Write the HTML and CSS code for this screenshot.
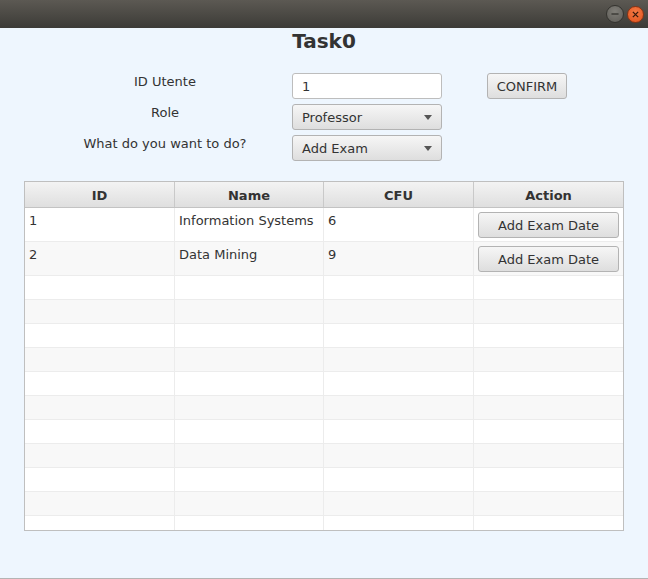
FILE: index.html
```html
<!DOCTYPE html>
<html>
<head>
<meta charset="utf-8">
<link rel="stylesheet" href="styles.css">
</head>
<body>
<div class="window">
  <div class="titlebar">
    <span class="wbtn wbtn-min"><svg width="18" height="18" viewBox="0 0 18 18"><line x1="5" y1="9" x2="13" y2="9" stroke="#3a3935" stroke-width="1.6"/></svg></span>
    <span class="wbtn wbtn-close"><svg width="17" height="17" viewBox="0 0 17 17"><path d="M5.5 5.5 L11.5 11.5 M11.5 5.5 L5.5 11.5" stroke="#3a1a0c" stroke-width="1.5"/></svg></span>
  </div>
  <div class="content">
    <h1 class="title">Task0</h1>
    <div class="form">
      <div class="label">ID Utente</div>
      <div class="field">1</div>
      <div class="btn confirm">CONFIRM</div>
      <div class="label">Role</div>
      <div class="btn combo"><span>Professor</span><svg width="8" height="5" viewBox="0 0 8 5"><path d="M0 0 H8 L4 5 Z" fill="#555"/></svg></div>
      <div></div>
      <div class="label">What do you want to do?</div>
      <div class="btn combo"><span>Add Exam</span><svg width="8" height="5" viewBox="0 0 8 5"><path d="M0 0 H8 L4 5 Z" fill="#555"/></svg></div>
      <div></div>
    </div>
    <div class="table">
      <div class="row head">
        <div class="cell">ID</div><div class="cell">Name</div><div class="cell">CFU</div><div class="cell">Action</div>
      </div>
      <div class="row tall">
        <div class="cell">1</div><div class="cell">Information Systems</div><div class="cell">6</div><div class="cell action"><div class="btn rowbtn">Add Exam Date</div></div>
      </div>
      <div class="row tall odd">
        <div class="cell">2</div><div class="cell">Data Mining</div><div class="cell">9</div><div class="cell action"><div class="btn rowbtn">Add Exam Date</div></div>
      </div>
      <div class="row"><div class="cell"></div><div class="cell"></div><div class="cell"></div><div class="cell"></div></div>
      <div class="row odd"><div class="cell"></div><div class="cell"></div><div class="cell"></div><div class="cell"></div></div>
      <div class="row"><div class="cell"></div><div class="cell"></div><div class="cell"></div><div class="cell"></div></div>
      <div class="row odd"><div class="cell"></div><div class="cell"></div><div class="cell"></div><div class="cell"></div></div>
      <div class="row"><div class="cell"></div><div class="cell"></div><div class="cell"></div><div class="cell"></div></div>
      <div class="row odd"><div class="cell"></div><div class="cell"></div><div class="cell"></div><div class="cell"></div></div>
      <div class="row"><div class="cell"></div><div class="cell"></div><div class="cell"></div><div class="cell"></div></div>
      <div class="row odd"><div class="cell"></div><div class="cell"></div><div class="cell"></div><div class="cell"></div></div>
      <div class="row"><div class="cell"></div><div class="cell"></div><div class="cell"></div><div class="cell"></div></div>
      <div class="row odd"><div class="cell"></div><div class="cell"></div><div class="cell"></div><div class="cell"></div></div>
      <div class="row"><div class="cell"></div><div class="cell"></div><div class="cell"></div><div class="cell"></div></div>
    </div>
  </div>
</div>
</body>
</html>
```
FILE: styles.css
```css
* { box-sizing: border-box; }
html, body { margin: 0; padding: 0; }
body {
  width: 648px;
  height: 579px;
  overflow: hidden;
  font-family: "DejaVu Sans", "Liberation Sans", sans-serif;
  font-size: 13px;
  color: #333333;
  background: #eef6fe;
}
.window {
  height: 579px;
  display: flex;
  flex-direction: column;
  border-bottom: 1px solid #b4b4b4;
}
.titlebar {
  height: 28px;
  flex: none;
  background: linear-gradient(#5c5953, #3c3b37);
  display: flex;
  justify-content: flex-end;
  align-items: center;
  padding-right: 4px;
  gap: 3px;
}
.wbtn {
  border-radius: 50%;
  display: flex;
  align-items: center;
  justify-content: center;
}
.wbtn-min {
  width: 18px; height: 18px;
  background: radial-gradient(circle at 50% 35%, #807e78, #5e5c57);
  border: 1px solid #34332f;
}
.wbtn-close {
  width: 17px; height: 17px;
  background: radial-gradient(circle at 50% 35%, #f47a45, #e2521c);
  border: 1px solid #8a3313;
}
.content {
  flex: 1;
  display: flex;
  flex-direction: column;
}
.title {
  margin: 2px 0 0 0;
  height: 23px;
  line-height: 23px;
  font-size: 20px;
  font-weight: bold;
  text-align: center;
  color: #333;
}
.form {
  margin: 20px 0 0 60px;
  display: grid;
  grid-template-columns: 210px 150px 103px;
  grid-auto-rows: 26px;
  column-gap: 22px;
  row-gap: 5px;
}
.label {
  text-align: center;
  line-height: 18px;
}
.field {
  background: #fff;
  border: 1px solid #bdbdbd;
  border-radius: 3px;
  padding: 2px 0 0 9px;
  line-height: 22px;
}
.btn {
  background: linear-gradient(#f6f6f6, #dedede);
  border: 1px solid #b3b3b3;
  border-radius: 3px;
  padding-top: 2px;
  line-height: 22px;
  color: #333;
}
.confirm {
  margin-left: 23px;
  width: 80px;
  text-align: center;
}
.combo {
  display: flex;
  align-items: center;
  justify-content: space-between;
  padding: 2px 9px 0 9px;
}
.combo svg { margin-top: -1px; }
.table {
  margin: 20px 0 0 24px;
  width: 600px;
  height: 350px;
  border: 1px solid #bfbfbf;
  background: #fff;
  overflow: hidden;
}
.row {
  display: grid;
  grid-template-columns: 150px 149px 150px 149px;
  height: 24px;
  border-bottom: 1px solid #ececec;
}
.row .cell { border-right: 1px solid #ececec; padding: 5px 0 0 4px; }
.row .cell:last-child { border-right: none; }
.row.odd { background: #f8f8f8; }
.row.tall { height: 34px; }
.row.head {
  height: 26px;
  background: linear-gradient(#f3f3f3, #dfdfdf);
  border-bottom: 1px solid #c3c3c3;
}
.row.head .cell {
  border-right: 1px solid #c9c9c9;
  font-weight: bold;
  text-align: center;
  padding: 2px 0 0 0;
  line-height: 23px;
}
.row.head .cell:last-child { border-right: none; }
.row .cell.action { padding: 4px 4px 0 4px; }
.rowbtn {
  height: 26px;
  text-align: center;
}
```
